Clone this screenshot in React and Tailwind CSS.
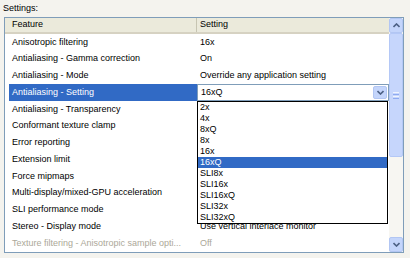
import React from 'react';

const rows = [
  { feature: 'Anisotropic filtering', value: '16x' },
  { feature: 'Antialiasing - Gamma correction', value: 'On' },
  { feature: 'Antialiasing - Mode', value: 'Override any application setting' },
  { feature: 'Antialiasing - Setting', value: '16xQ', selected: true },
  { feature: 'Antialiasing - Transparency', value: '' },
  { feature: 'Conformant texture clamp', value: '' },
  { feature: 'Error reporting', value: '' },
  { feature: 'Extension limit', value: '' },
  { feature: 'Force mipmaps', value: '' },
  { feature: 'Multi-display/mixed-GPU acceleration', value: '' },
  { feature: 'SLI performance mode', value: '' },
  { feature: 'Stereo - Display mode', value: 'Use vertical interlace monitor' },
  { feature: 'Texture filtering - Anisotropic sample opti...', value: 'Off', disabled: true },
];

const options = ['2x', '4x', '8xQ', '8x', '16x', '16xQ', 'SLI8x', 'SLI16x', 'SLI16xQ', 'SLI32x', 'SLI32xQ'];

const Chevron = ({ up = false }) => (
  <svg width="7" height="5" viewBox="0 0 7 5">
    <path d={up ? 'M0.5 4 L3.5 1 L6.5 4' : 'M0.5 1 L3.5 4 L6.5 1'} stroke="#4d6185" strokeWidth="1.6" fill="none" />
  </svg>
);

const ScrollButton = ({ up }) => (
  <div className="h-[15px] flex items-center justify-center bg-[#c4d5fb] border border-[#b2c6f3] rounded-[2px]">
    <Chevron up={up} />
  </div>
);

const App = () => {
  return (
    <div className="w-[410px] h-[258px] bg-[#f4f3ee] overflow-hidden font-['Liberation_Sans',Arial,sans-serif] text-[9px] text-black">
      <div className="h-[17px] pl-[3px] pt-[3px] leading-[10px]">Settings:</div>

      <div className="ml-[4px] w-[400px] h-[236px] border border-[#7f9db9] bg-white flex">
        <div className="w-[384px] flex flex-col">
          {/* header */}
          <div className="h-[16px] flex bg-[#ebeadb] border-b-2 border-[#d6d2c2]">
            <div className="w-[192px] flex items-center pl-[7px] border-r border-[#c7c5b2]">Feature</div>
            <div className="flex-1 flex items-center pl-[3px]">Setting</div>
          </div>

          {rows.map((row) => (
            <div key={row.feature} className="h-[16.75px] flex shrink-0">
              <div className="w-[192px] pl-[4px] flex">
                <div
                  className={`flex-1 flex items-center pl-[3px] whitespace-nowrap ${
                    row.selected ? 'bg-[#316ac5] text-white' : row.disabled ? 'text-[#aca899]' : ''
                  }`}
                >
                  {row.feature}
                </div>
              </div>
              <div className={`relative flex-1 flex items-center whitespace-nowrap ${row.disabled ? 'text-[#aca899]' : ''}`}>
                {row.selected ? (
                  <>
                    <div className="w-full h-[17px] border border-[#7f9db9] bg-white flex items-center pl-[3px] pr-[1px]">
                      <span className="flex-1">16xQ</span>
                      <div className="w-[14px] h-[13px] flex items-center justify-center bg-[#c4d5fb] border border-[#b2c6f3] rounded-[2px]">
                        <Chevron />
                      </div>
                    </div>
                    <div className="absolute left-0 top-[16.5px] w-[191px] border border-black bg-white z-10">
                      {options.map((opt) => (
                        <div
                          key={opt}
                          className={`h-[11px] pl-[2px] flex items-center leading-none ${
                            opt === '16xQ' ? 'bg-[#316ac5] text-white' : ''
                          }`}
                        >
                          {opt}
                        </div>
                      ))}
                    </div>
                  </>
                ) : (
                  <span className="pl-[3px]">{row.value}</span>
                )}
              </div>
            </div>
          ))}
        </div>

        {/* scrollbar */}
        <div className="w-[14px] flex flex-col bg-[#f7f6f2]">
          <ScrollButton up />
          <div className="h-[124px] bg-[#c6d6fc] border border-[#b4c8f6] rounded-[2px] flex flex-col items-center justify-center gap-[1px]">
            <div className="w-[6px] h-[1px] bg-[#eef3fe]" />
            <div className="w-[6px] h-[1px] bg-[#8eaaf0]" />
            <div className="w-[6px] h-[1px] bg-[#eef3fe]" />
            <div className="w-[6px] h-[1px] bg-[#8eaaf0]" />
          </div>
          <div className="flex-1" />
          <ScrollButton />
        </div>
      </div>
    </div>
  );
};

export default App;
